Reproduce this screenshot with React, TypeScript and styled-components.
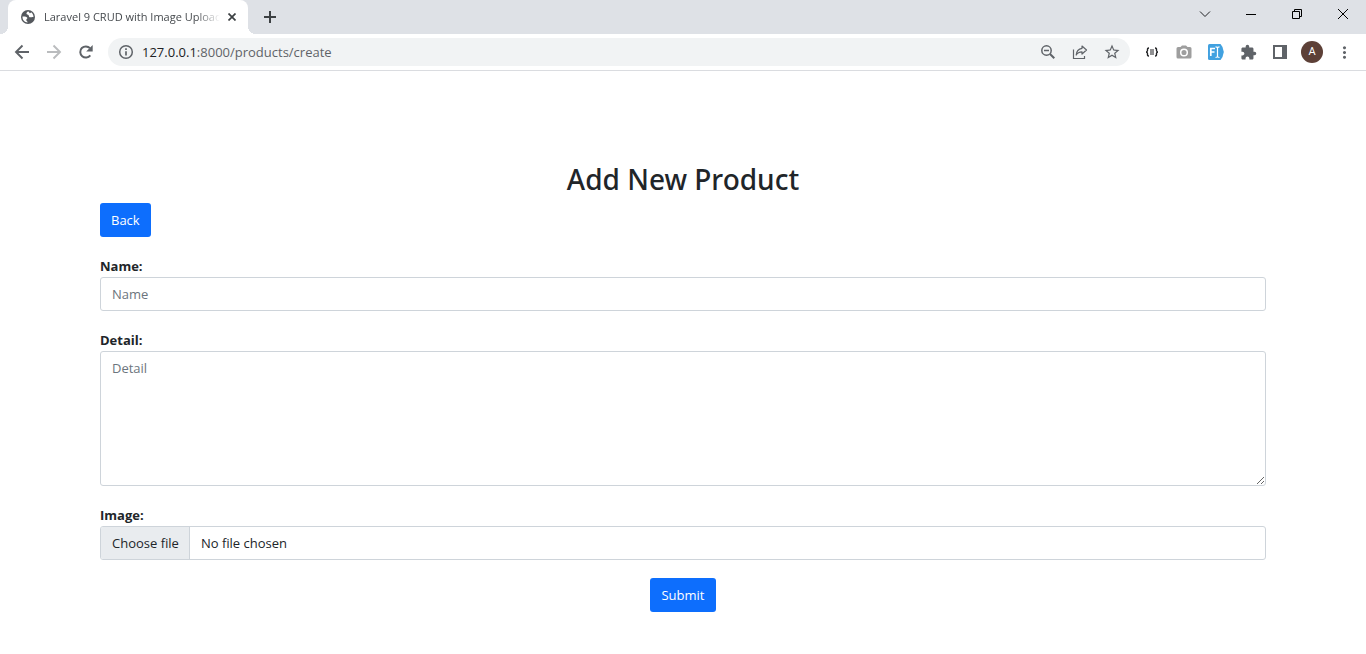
import React from "react";
import styled, { createGlobalStyle } from "styled-components";
import { MdExtension, MdMoreVert, MdStarBorder } from "react-icons/md";

const GlobalStyle = createGlobalStyle`
  *, *::before, *::after { box-sizing: border-box; }
  body {
    margin: 0;
    background: #fff;
    color: #212529;
    font-family: "Open Sans", "Noto Sans", sans-serif;
    font-size: 13px;
    line-height: 22px;
  }
  button, input, textarea { font: inherit; }
  svg { display: block; flex: none; }
`;

const IconButton = styled.button<{ $width?: number; $color?: string }>`
  display: flex;
  align-items: center;
  justify-content: center;
  flex: none;
  width: ${(p) => p.$width ?? 32}px;
  height: 28px;
  padding: 0;
  border: 0;
  background: transparent;
  color: ${(p) => p.$color ?? "#5f6368"};
`;

const TabStrip = styled.div`
  display: flex;
  height: 34px;
  padding-left: 8px;
  background: #dee1e6;
`;

const Tab = styled.div`
  position: relative;
  display: flex;
  align-items: center;
  width: 240px;
  padding: 0 4px 0 12px;
  border-radius: 8px 8px 0 0;
  background: #fff;
  color: #45494d;

  &::before,
  &::after {
    content: "";
    position: absolute;
    bottom: 0;
    width: 8px;
    height: 8px;
  }
  &::before {
    right: 100%;
    background: radial-gradient(circle at 0 0, transparent 8px, #fff 8px);
  }
  &::after {
    left: 100%;
    background: radial-gradient(circle at 100% 0, transparent 8px, #fff 8px);
  }
`;

const TabTitle = styled.span`
  flex: 1;
  min-width: 0;
  margin-left: 8px;
  overflow: hidden;
  white-space: nowrap;
  font-size: 11px;
  mask-image: linear-gradient(to right, #000 calc(100% - 24px), transparent);
`;

const TabActions = styled.div`
  display: flex;
  align-items: center;
  padding-left: 6px;
`;

const WindowControls = styled.div`
  display: flex;
  margin-left: auto;
`;

const Toolbar = styled.div`
  display: flex;
  align-items: center;
  height: 37px;
  padding: 0 6px;
  border-bottom: 1px solid #dadce0;
  background: #fff;
`;

const AddressBar = styled.div`
  display: flex;
  flex: 1;
  align-items: center;
  min-width: 0;
  height: 28px;
  margin: 0 6px;
  padding: 0 2px;
  border-radius: 14px;
  background: #f1f3f4;
`;

const Address = styled.span`
  flex: 1;
  min-width: 0;
  overflow: hidden;
  white-space: nowrap;
  color: #5f6368;

  b {
    color: #202124;
    font-weight: 400;
  }
`;

const Avatar = styled.span`
  display: flex;
  align-items: center;
  justify-content: center;
  width: 22px;
  height: 22px;
  border-radius: 50%;
  background: #5d4037;
  color: #fff;
  font: 11px/22px Roboto, sans-serif;
`;

const Page = styled.main`
  margin: 90px 100px 40px;
`;

const Heading = styled.h2`
  margin: 0 0 6px;
  font-family: "Noto Sans", "Open Sans", sans-serif;
  font-size: 28px;
  font-weight: 500;
  line-height: 36px;
  text-align: center;
`;

const Form = styled.form`
  display: flex;
  flex-direction: column;
  gap: 18px;
  margin-top: 18px;
`;

const primary = `
  height: 34px;
  padding: 0 11px;
  border: 0;
  border-radius: 3px;
  background: #0d6efd;
  color: #fff;
  line-height: 34px;
  text-decoration: none;
`;

const BackLink = styled.a`
  ${primary}
  display: block;
  width: fit-content;
`;

const SubmitButton = styled.button`
  ${primary}
  align-self: center;
`;

const Field = styled.div`
  display: flex;
  flex-direction: column;
`;

const Label = styled.label`
  font-weight: 700;
`;

const TextInput = styled.input`
  width: 100%;
  height: 34px;
  padding: 0 11px;
  border: 1px solid #ced4da;
  border-radius: 3px;
  &::placeholder { color: #6c757d; }
`;

const TextArea = styled.textarea`
  display: block;
  width: 100%;
  height: 135px;
  padding: 5px 11px;
  border: 1px solid #ced4da;
  border-radius: 3px;
  resize: vertical;
  &::placeholder { color: #6c757d; }
`;

const FilePicker = styled.div`
  position: relative;
  display: flex;
  height: 34px;
  border: 1px solid #ced4da;
  border-radius: 3px;
  overflow: hidden;
  line-height: 32px;
`;

const FileInput = styled.input`
  position: absolute;
  inset: 0;
  width: 100%;
  opacity: 0;
`;

const FileButton = styled.span`
  padding: 0 10px 0 11px;
  border-right: 1px solid #ced4da;
  background: #e9ecef;
`;

const FileName = styled.span`
  padding: 0 11px;
`;

const Stroke = ({ d, size, width = 1 }: { d: string; size: number; width?: number }) => (
  <svg width={size} height={size} viewBox={`0 0 ${size} ${size}`} fill="none" stroke="currentColor" strokeWidth={width}>
    <path d={d} />
  </svg>
);

const GlobeIcon = () => (
  <svg width="16" height="16" viewBox="0 0 16 16">
    <circle cx="8" cy="8" r="7" fill="#54585d" />
    <path
      fill="#fff"
      d="M8.300 2.600C7 3 6.300 3.800 6.500 4.800 6.700 5.800 8 5.600 8.600 6.200 9.200 7 8.600 7.600 9.600 8.200 10.600 8.700 12.600 7.600 13.500 8.200 13.500 6 12.500 4.200 11 3.300 10.800 4.300 9.500 4.500 9.300 3.700 9.200 3.200 9 2.800 8.300 2.600zM2.500 7.500C4.500 7.300 6.800 7.600 7.300 8.800 7.600 9.800 6.300 10 6.300 11 6.300 12 7.800 12.300 7.600 13.500 4.800 13.400 2.300 11 2.500 7.500z"
    />
  </svg>
);

const ReloadIcon = () => (
  <svg width="16" height="16" viewBox="0 0 16 16">
    <path d="M12.300 11.400A5.600 5.600 0 1 1 12 4.200" fill="none" stroke="currentColor" strokeWidth="2" />
    <path d="M14.700 1v6.500H8.200z" fill="currentColor" />
  </svg>
);

const InfoIcon = () => (
  <svg width="16" height="16" viewBox="0 0 16 16" fill="none" stroke="currentColor" strokeWidth="1.500">
    <circle cx="8" cy="8" r="6.300" />
    <path d="M8 7.200v4.300M8 4.300v1.700" strokeWidth="1.700" />
  </svg>
);

const ZoomOutIcon = () => (
  <svg width="16" height="16" viewBox="0 0 16 16" fill="none" stroke="currentColor" strokeWidth="1.500">
    <circle cx="6.500" cy="6.500" r="4.700" />
    <path d="M10 10l4.300 4.300" strokeWidth="2" />
    <path d="M4 6.500h5" />
  </svg>
);

const ShareIcon = () => (
  <svg width="16" height="16" viewBox="0 0 16 16" fill="none" stroke="currentColor" strokeWidth="1.200">
    <path d="M1.500 5.500v9h11v-2.500" />
    <path d="M10 2l4.500 4L10 10V7.800C7.500 7.800 5.500 8.600 4.200 11 4.500 7 6.500 4.800 10 4.300z" strokeLinejoin="round" />
  </svg>
);

const BracesIcon = () => (
  <svg width="14" height="10" viewBox="0 0 14 10" fill="none" stroke="#202124" strokeWidth="1.400">
    <path d="M4 1C2 1 2.600 2.500 2.500 3.500 2.400 4.500 2 5 1 5c1 0 1.400.5 1.500 1.500C2.600 7.500 2 9 4 9M10 1c2 0 1.400 1.500 1.500 2.500.1 1 .5 1.500 1.500 1.500-1 0-1.400.5-1.500 1.500C11.400 7.500 12 9 10 9" />
    <path d="M5 3h4M5 5h4M5 7h4" strokeWidth="1" />
  </svg>
);

const CameraIcon = () => (
  <svg width="16" height="14" viewBox="0 0 16 14">
    <path fill="#9e9e9e" d="M2 2h2.500L6 .5h4L11.500 2H14q1.500 0 1.500 1.500v8.500q0 1.500-1.500 1.500H2Q.5 13.500.5 12V3.500Q.5 2 2 2z" />
    <circle cx="8" cy="7.500" r="3.300" fill="none" stroke="#fff" strokeWidth="1.500" />
  </svg>
);

const FontIcon = () => (
  <svg width="16" height="16" viewBox="0 0 16 16">
    <path fill="#41a1e0" d="M1.500 0H12.500l2 3 1.300 5-1.300 5-2 3H1.500Q0 16 0 14.500v-13Q0 0 1.500 0z" />
    <path fill="none" stroke="#fff" strokeWidth="1.700" d="M2.800 12V4.500h4.200M2.800 8h3.700" />
    <path fill="none" stroke="#fff" strokeWidth="1.200" d="M7.500 2.800q2 0 2 1.200 0-1.200 2-1.200M9.500 4v8.500M7.500 13.500q2 0 2-1.200 0 1.200 2 1.200" />
  </svg>
);

const PanelIcon = () => (
  <svg width="14" height="14" viewBox="0 0 14 14">
    <path fill="currentColor" fillRule="evenodd" d="M0 0h14v14H0zM2 2v10h7V2z" />
  </svg>
);

export default function App() {
  return (
    <>
      <GlobalStyle />
      <header>
        <TabStrip>
          <Tab>
            <GlobeIcon />
            <TabTitle>Laravel 9 CRUD with Image Upload</TabTitle>
            <IconButton aria-label="Close tab" $width={24} $color="#3c4043">
              <Stroke size={8} width={1.7} d="M.5.5l7 7m0-7l-7 7" />
            </IconButton>
          </Tab>
          <TabActions>
            <IconButton aria-label="New tab" $color="#3c4043">
              <Stroke size={12} width={2} d="M6 0v12M0 6h12" />
            </IconButton>
          </TabActions>
          <WindowControls>
            <IconButton aria-label="Search tabs" $width={46} $color="#202124">
              <Stroke size={12} d="M1 3.500l5 5 5-5" />
            </IconButton>
            <IconButton aria-label="Minimize" $width={46} $color="#000">
              <Stroke size={10} d="M0 5.500h10" />
            </IconButton>
            <IconButton aria-label="Restore" $width={46} $color="#000">
              <Stroke size={10} d="M.5 2.500h7v7h-7zM2.500 2.500v-2h7v7h-2" />
            </IconButton>
            <IconButton aria-label="Close" $width={46} $color="#000">
              <Stroke size={10} d="M0 0l10 10M10 0L0 10" />
            </IconButton>
          </WindowControls>
        </TabStrip>
        <Toolbar>
          <IconButton aria-label="Back">
            <Stroke size={16} width={1.9} d="M15 8H2.500M8.500 1.500L2 8l6.500 6.500" />
          </IconButton>
          <IconButton aria-label="Forward" $color="#babcbe">
            <Stroke size={16} width={1.9} d="M1 8h12.500M7.500 1.500L14 8l-6.500 6.500" />
          </IconButton>
          <IconButton aria-label="Reload"><ReloadIcon /></IconButton>
          <AddressBar>
            <IconButton aria-label="Site information"><InfoIcon /></IconButton>
            <Address><b>127.0.0.1</b>:8000/products/create</Address>
            <IconButton aria-label="Zoom"><ZoomOutIcon /></IconButton>
            <IconButton aria-label="Share"><ShareIcon /></IconButton>
            <IconButton aria-label="Bookmark"><MdStarBorder size={18} /></IconButton>
          </AddressBar>
          <IconButton aria-label="JSON viewer"><BracesIcon /></IconButton>
          <IconButton aria-label="Screenshot"><CameraIcon /></IconButton>
          <IconButton aria-label="Font finder"><FontIcon /></IconButton>
          <IconButton aria-label="Extensions"><MdExtension size={17} /></IconButton>
          <IconButton aria-label="Side panel"><PanelIcon /></IconButton>
          <IconButton aria-label="Profile"><Avatar>A</Avatar></IconButton>
          <IconButton aria-label="Menu"><MdMoreVert size={19} /></IconButton>
        </Toolbar>
      </header>
      <Page>
        <Heading>Add New Product</Heading>
        <BackLink href="#products">Back</BackLink>
        <Form>
          <Field>
            <Label htmlFor="name">Name:</Label>
            <TextInput id="name" type="text" placeholder="Name" />
          </Field>
          <Field>
            <Label htmlFor="detail">Detail:</Label>
            <TextArea id="detail" placeholder="Detail" />
          </Field>
          <Field>
            <Label htmlFor="image">Image:</Label>
            <FilePicker>
              <FileButton>Choose file</FileButton>
              <FileName>No file chosen</FileName>
              <FileInput id="image" type="file" />
            </FilePicker>
          </Field>
          <SubmitButton type="submit">Submit</SubmitButton>
        </Form>
      </Page>
    </>
  );
}
